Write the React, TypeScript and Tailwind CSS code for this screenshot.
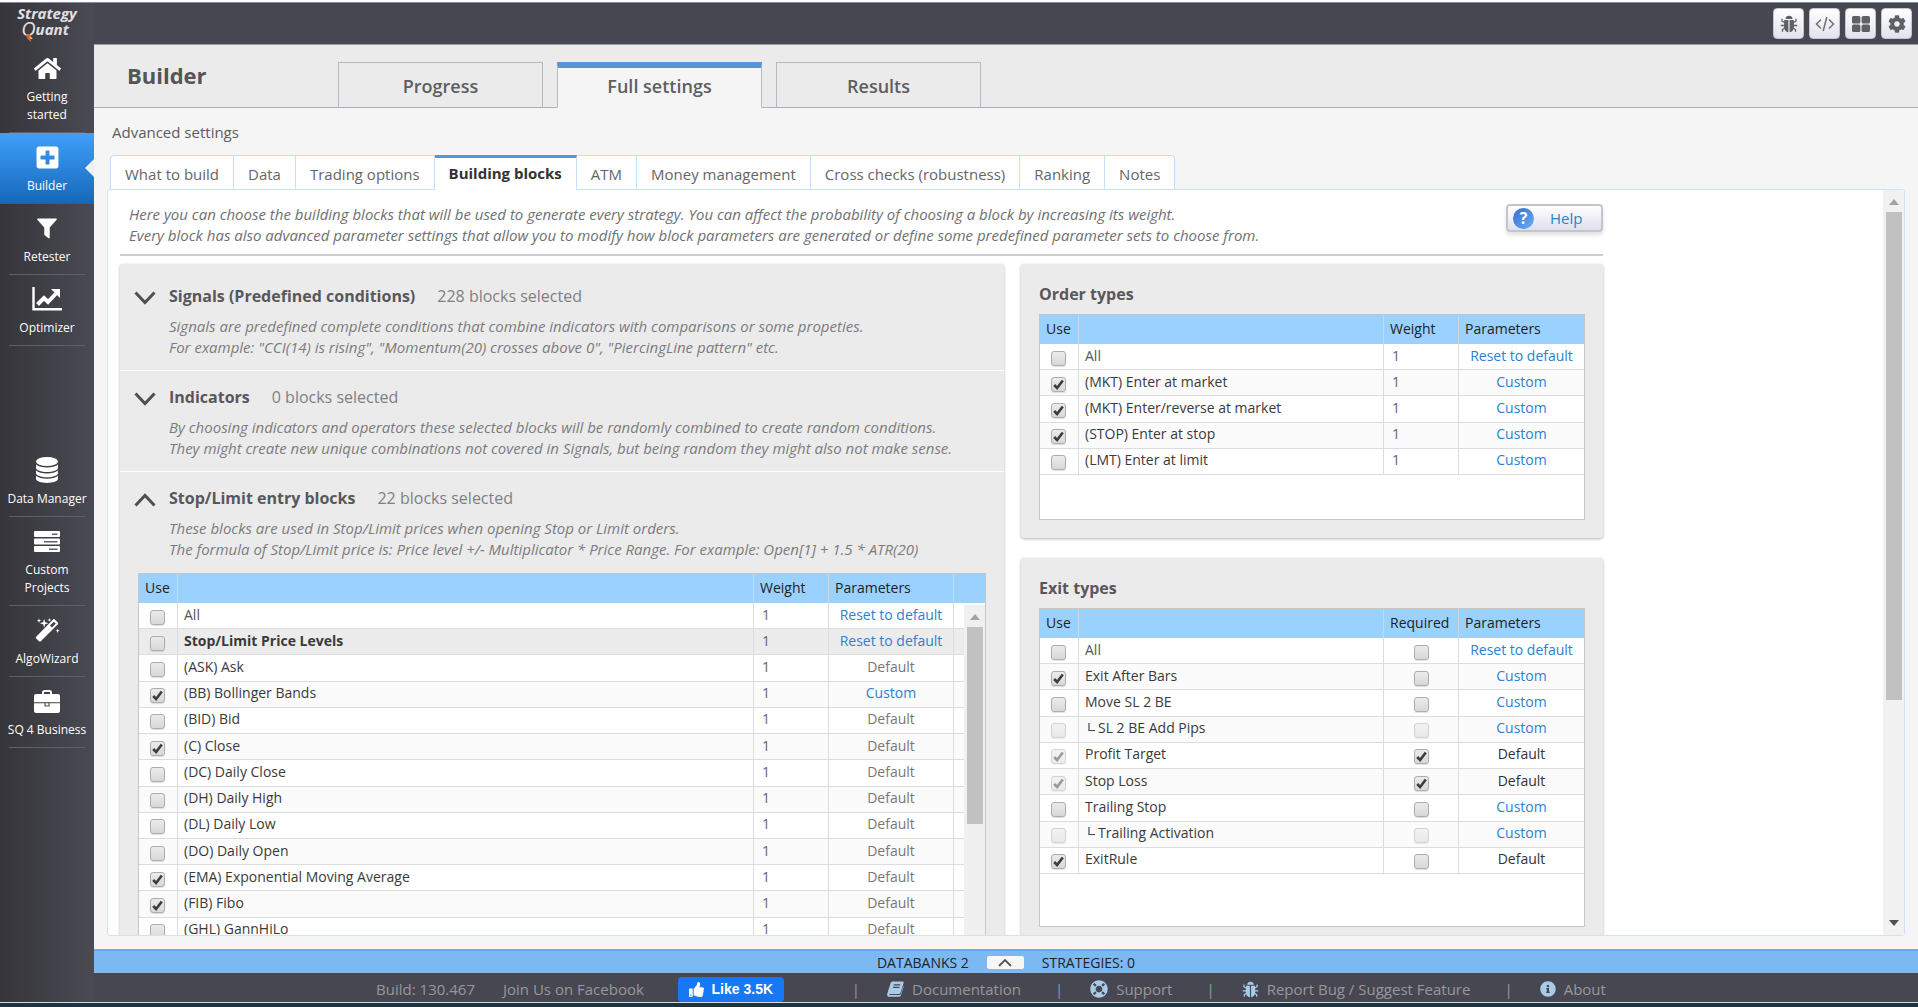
import * as React from "react"
import clsx from "clsx"
import { FaCog, FaHome, FaInfoCircle, FaLifeRing, FaPlusSquare, FaThumbsUp } from "react-icons/fa"

type Row = {
  name: string
  use?: boolean
  useDisabled?: boolean
  weight?: number
  required?: boolean
  requiredDisabled?: boolean
  params: string
  group?: boolean
  child?: boolean
}

const stopLimitRows: Row[] = [
  { name: "All", weight: 1, params: "Reset to default" },
  { name: "Stop/Limit Price Levels", weight: 1, params: "Reset to default", group: true },
  { name: "(ASK) Ask", weight: 1, params: "Default" },
  { name: "(BB) Bollinger Bands", use: true, weight: 1, params: "Custom" },
  { name: "(BID) Bid", weight: 1, params: "Default" },
  { name: "(C) Close", use: true, weight: 1, params: "Default" },
  { name: "(DC) Daily Close", weight: 1, params: "Default" },
  { name: "(DH) Daily High", weight: 1, params: "Default" },
  { name: "(DL) Daily Low", weight: 1, params: "Default" },
  { name: "(DO) Daily Open", weight: 1, params: "Default" },
  { name: "(EMA) Exponential Moving Average", use: true, weight: 1, params: "Default" },
  { name: "(FIB) Fibo", use: true, weight: 1, params: "Default" },
  { name: "(GHL) GannHiLo", weight: 1, params: "Default" },
]

const orderRows: Row[] = [
  { name: "All", weight: 1, params: "Reset to default" },
  { name: "(MKT) Enter at market", use: true, weight: 1, params: "Custom" },
  { name: "(MKT) Enter/reverse at market", use: true, weight: 1, params: "Custom" },
  { name: "(STOP) Enter at stop", use: true, weight: 1, params: "Custom" },
  { name: "(LMT) Enter at limit", weight: 1, params: "Custom" },
]

const exitRows: Row[] = [
  { name: "All", params: "Reset to default" },
  { name: "Exit After Bars", use: true, params: "Custom" },
  { name: "Move SL 2 BE", params: "Custom" },
  { name: "SL 2 BE Add Pips", useDisabled: true, requiredDisabled: true, params: "Custom", child: true },
  { name: "Profit Target", use: true, useDisabled: true, required: true, params: "Default" },
  { name: "Stop Loss", use: true, useDisabled: true, required: true, params: "Default" },
  { name: "Trailing Stop", params: "Custom" },
  { name: "Trailing Activation", useDisabled: true, requiredDisabled: true, params: "Custom", child: true },
  { name: "ExitRule", use: true, params: "Default" },
]

/* ---------- icons ---------- */

function ChartIcon() {
  return (
    <svg width="30" height="24" viewBox="0 0 30 24" fill="none" stroke="white">
      <path d="M1.500 0v22.200H30" strokeWidth="2.400" />
      <path d="M5.500 17.500l6.500-6.500 4 4 8-8.500" strokeWidth="4" />
      <path d="M19 2h9v9z" fill="white" stroke="none" />
    </svg>
  )
}

function FilterIcon() {
  return (
    <svg width="20" height="21" viewBox="0 0 22 22" fill="white">
      <path d="M1 0h20c.8 0 1.100.9.600 1.500L14 10v11.200c0 .7-.7 1-1.300.6L8.500 18.500c-.3-.3-.5-.6-.5-1V10L.4 1.500C-.1.900.2 0 1 0z" />
    </svg>
  )
}

function DatabaseIcon() {
  return (
    <svg width="24" height="26" viewBox="0 0 24 26" fill="white">
      <ellipse cx="12" cy="4.500" rx="11" ry="4.500" />
      <path d="M1 7.500c2 2 6.500 3 11 3s9-1 11-3V11c0 2.200-5 4-11 4S1 13.200 1 11z" />
      <path d="M1 13.500c2 2 6.500 3 11 3s9-1 11-3v2.800c0 2.200-5 4-11 4s-11-1.800-11-4z" />
      <path d="M1 18.800c2 2 6.500 3 11 3s9-1 11-3v3c0 2.300-5 4.200-11 4.200S1 24.100 1 21.800z" />
    </svg>
  )
}

function ProjectsIcon() {
  return (
    <svg width="26" height="21" viewBox="0 0 26 21">
      <g fill="white">
        <rect width="26" height="6" rx="1" />
        <rect y="7.500" width="26" height="6" rx="1" />
        <rect y="15" width="26" height="6" rx="1" />
      </g>
      <g fill="#63636d">
        <rect x="18" y="2.500" width="5.500" height="1.500" />
        <rect x="10" y="10" width="13.500" height="1.500" />
        <rect x="15" y="17.500" width="8.500" height="1.500" />
      </g>
    </svg>
  )
}

function WandIcon() {
  return (
    <svg width="25" height="25" viewBox="0 0 26 26" fill="white">
      <path d="M20.500 1.500l3.300 3.300c.5.500.5 1.200 0 1.700L6 24.300c-.5.500-1.200.5-1.700 0L1.200 21.200c-.5-.5-.5-1.200 0-1.700L18.800 1.500c.5-.5 1.200-.5 1.700 0zM19.600 3.800l-4 4 2 2 4-4z" fillRule="evenodd" />
      <path d="M9.500 1l1.100 3.400L14 5.500l-3.400 1.100L9.500 10 8.400 6.600 5 5.500l3.400-1.100z" />
      <path d="M4.200.5l.6 1.700 1.700.6-1.700.6-.6 1.700-.6-1.700-1.700-.6 1.700-.6zM15 0l.5 1.500 1.500.5-1.500.5L15 4l-.5-1.500L13 2l1.500-.5zM23.500 11l.6 1.700 1.700.6-1.700.6-.6 1.700-.6-1.700-1.700-.6 1.700-.6z" />
    </svg>
  )
}

function BriefcaseIcon() {
  return (
    <svg width="26" height="23" viewBox="0 0 26 23">
      <path d="M9 4V2.500C9 1.700 9.700 1 10.500 1h5c.8 0 1.500.7 1.500 1.500V4" fill="none" stroke="white" strokeWidth="2" />
      <path d="M2 4h22c1.100 0 2 .9 2 2v6.300H0V6c0-1.100.9-2 2-2zM0 13.300h26V21c0 1.100-.9 2-2 2H2c-1.100 0-2-.9-2-2z" fill="white" />
      <path d="M11 12.500v3.500h4v-3.500" fill="none" stroke="#53535d" strokeWidth="1.200" />
    </svg>
  )
}

function BugIcon({ className }: { className?: string }) {
  return (
    <svg viewBox="0 0 18 18" className={className} fill="currentColor">
      <path d="M5.500 4C5.500 2 7 .8 9 .8S12.500 2 12.500 4z" />
      <path d="M4.200 5h4.200v12.300C5.700 17 4 14.800 4 11.500zM13.800 5H9.600v12.300c2.700-.3 4.400-2.500 4.400-5.800z" />
      <path d="M4.600 7.500L2 6V3.800M4.400 10.500H.8M4.800 13l-2.300 1.500v2.300M13.400 7.500L16 6V3.800M13.600 10.500h3.600M13.200 13l2.300 1.500v2.300" fill="none" stroke="currentColor" strokeWidth="1.300" />
    </svg>
  )
}

function CodeIcon() {
  return (
    <svg width="20" height="16" viewBox="0 0 20 16" fill="none" stroke="#707076" strokeWidth="1.500">
      <path d="M6 3.500L1.500 8 6 12.500M14 3.500l4.500 4.500L14 12.500M11.800 1L8.200 15" />
    </svg>
  )
}

function GridIcon() {
  return (
    <svg width="18" height="16" viewBox="0 0 18 16" fill="#5f5f66">
      <rect width="8.400" height="7.400" rx="1.500" />
      <rect x="9.600" width="8.400" height="7.400" rx="1.500" />
      <rect y="8.600" width="8.400" height="7.400" rx="1.500" />
      <rect x="9.600" y="8.600" width="8.400" height="7.400" rx="1.500" />
    </svg>
  )
}

function BookIcon() {
  return (
    <svg width="17" height="16" viewBox="0 0 17 16">
      <path d="M5.500.5h10c.9 0 1.400.7 1.100 1.500l-3.200 10c-.2.700-.8 1.100-1.500 1.100H3c-.7 0-.9.900-.2.900h9.900c.5 0 .9-.3 1-.8l2.800-8.700v1.700l-2.700 8.300c-.3.800-1 1.300-1.800 1.300H2.300C.8 15.800-.2 14.500.2 13L3.600 2C3.900 1.100 4.600.5 5.500.5z" fill="#a9cbe8" />
      <path d="M6.700 3.800h6.500M5.900 6.300h6.500" stroke="#474751" strokeWidth="1.200" />
    </svg>
  )
}

function Chevron({ up }: { up?: boolean }) {
  return (
    <svg width="22" height="14" viewBox="0 0 22 14" fill="none" stroke="#4f4f54" strokeWidth="3" className="mt-[3px] shrink-0">
      <path d={up ? "M1.500 12.500L11 2.500l9.500 10" : "M1.500 1.500l9.500 10 9.500-10"} />
    </svg>
  )
}

/* ---------- small parts ---------- */

function Check({ label, checked, disabled, className }: { label: string; checked?: boolean; disabled?: boolean; className?: string }) {
  const [on, setOn] = React.useState(!!checked)
  return (
    <span className={clsx("relative mt-[5px] block h-[15px] w-[15px]", disabled && "opacity-50", className)}>
      <input
        type="checkbox"
        aria-label={label}
        checked={on}
        disabled={disabled}
        onChange={() => setOn(!on)}
        className="block h-[15px] w-[15px] appearance-none rounded-[3px] border border-[#adadad] bg-gradient-to-b from-[#ebebeb] to-[#d8d8d8] shadow-[0_1px_1px_rgba(0,0,0,0.12)]"
      />
      {on && (
        <svg viewBox="0 0 15 15" className="pointer-events-none absolute inset-0 h-[15px] w-[15px]" fill="none" stroke="#3c3c3c" strokeWidth="2.600">
          <path d="M3.200 8l2.900 3L11.800 3.500" />
        </svg>
      )}
    </span>
  )
}

function ScrollArrow({ down }: { down?: boolean }) {
  return (
    <svg width="10" height="6" viewBox="0 0 10 6" fill={down ? "#505050" : "#a3a3a3"}>
      <path d={down ? "M0 0h10L5 6z" : "M0 6h10L5 0z"} />
    </svg>
  )
}

function Params({ value, muted }: { value: string; muted?: boolean }) {
  if (value === "Default") return <span className={muted ? "text-[#777]" : "text-[#333]"}>Default</span>
  return <a href="#" className="text-[#2e80d0]">{value}</a>
}

function BlocksTable({ rows, column, scroll, className }: { rows: Row[]; column: "Weight" | "Required"; scroll?: boolean; className: string }) {
  const th = "h-[29px] border-r border-[#c6d9e8] px-[6px] pb-0.5 text-left font-normal last:border-r-0"
  const td = "border-r border-b border-[#dcdcdc] p-0 px-[6px] pb-0.5"
  return (
    <table className={clsx("w-full table-fixed border-separate border-spacing-0 text-sm leading-5", className)}>
      <colgroup>
        <col className="w-[39px]" />
        <col />
        <col className="w-[75px]" />
        <col className="w-[125px]" />
        {scroll && <col className="w-[31px]" />}
      </colgroup>
      <thead className="bg-[#9bd1ff] text-[#222]">
        <tr>
          <th className={th}>Use</th>
          <th className={th} aria-label="Name"></th>
          <th className={th}>{column}</th>
          <th className={th}>Parameters</th>
          {scroll && <th className={th} aria-label="Scroll"></th>}
        </tr>
      </thead>
      <tbody>
        {rows.map((row, index) => (
          <tr key={row.name} className={row.group ? "bg-[#ececec]" : index % 2 ? "bg-[#fbfbfb]" : "bg-white"}>
            <td className={td}>
              <Check label={"Use " + row.name} checked={row.use} disabled={row.useDisabled} className="ml-[5px]" />
            </td>
            <td className={clsx(td, row.group && "font-bold", index === 0 ? "text-[#555]" : "text-[#3a3a3a]")}>
              {row.child && (
                <svg width="7" height="10" viewBox="0 0 7 10" className="mr-[3px] mb-1 ml-[3px] inline-block" fill="none" stroke="#444" strokeWidth="1.200">
                  <path d="M1 0v7.500h6" />
                </svg>
              )}
              {row.name}
            </td>
            <td className={clsx(td, "text-[#666]")}>
              {column === "Weight" ? <span className="pl-0.5">{row.weight}</span> : (
                <Check label={"Require " + row.name} checked={row.required} disabled={row.requiredDisabled} className="mx-auto" />
              )}
            </td>
            <td className={clsx(td, "text-center", !scroll && "border-r-0")}>
              <Params value={row.params} muted={scroll} />
            </td>
            {scroll && <td className="border-b border-[#dcdcdc]"></td>}
          </tr>
        ))}
      </tbody>
    </table>
  )
}

function Section({ title, count, open, lines, first, children }: { title: string; count: number; open?: boolean; lines: string[]; first?: boolean; children?: React.ReactNode }) {
  return (
    <section className={clsx("border-b border-white pb-3", first ? "pt-[22px]" : "pt-4")}>
      <button className="flex h-5 items-center pl-[14px] text-base leading-5">
        <Chevron up={open} />
        <span className="ml-[13px] font-bold text-[#58585c]">{title}</span>
        <span className="ml-[22px] text-[#808084]">{count} blocks selected</span>
      </button>
      <p className="mt-[10px] pl-[49px] text-[15px] leading-[21px] text-[#7c7c7e] italic">
        {lines.map((line) => <span key={line} className="block">{line}</span>)}
      </p>
      {children}
    </section>
  )
}

const cardStyle = "rounded-[3px] bg-[#ebebeb] shadow-[0_1px_3px_rgba(0,0,0,0.3)]"

/* ---------- page areas ---------- */

function NavItem({ icon, label, active }: { icon: React.ReactNode; label: string; active?: boolean }) {
  return (
    <a
      href="#"
      className={clsx(
        "relative flex flex-col items-center pt-[11px] text-center text-xs leading-[18px] text-white",
        active && "bg-gradient-to-b from-[#3fa0fb] to-[#1468b8]"
      )}
    >
      <span className="flex h-[26px] items-center">{icon}</span>
      <span className="mt-[7px] px-[6px] whitespace-pre-line">{label}</span>
      <span className={clsx("mt-2 h-px w-[76px]", !active && "bg-[#5f5f69]")} />
      {active && <span className="absolute top-[26px] right-0 border-y-[9px] border-r-[9px] border-y-transparent border-r-[#f0f0f0]" />}
    </a>
  )
}

function Sidebar() {
  return (
    <nav className="flex w-[94px] shrink-0 flex-col bg-gradient-to-r from-[#35353a] to-[#4a4a54]">
      <div className="relative h-[41px] pt-[2px] text-center text-[15px] leading-4 font-bold text-[#e0e0e4] italic">
        <div>Strategy</div>
        <div className="flex items-center justify-center pr-1">
          <span className="text-xl leading-4 font-normal">Q</span>uant
        </div>
        <svg width="6" height="8" viewBox="0 0 6 8" className="absolute top-[31px] left-[26px]">
          <path d="M0 0h4l1 8C2 6 0 3 0 0z" fill="#e0662c" />
        </svg>
      </div>
      <NavItem icon={<FaHome size={27} />} label={"Getting\nstarted"} />
      <NavItem icon={<FaPlusSquare size={25} />} label="Builder" active />
      <NavItem icon={<FilterIcon />} label="Retester" />
      <NavItem icon={<ChartIcon />} label="Optimizer" />
      <div className="mt-[100px]">
        <NavItem icon={<DatabaseIcon />} label="Data Manager" />
        <NavItem icon={<ProjectsIcon />} label={"Custom\nProjects"} />
        <NavItem icon={<WandIcon />} label="AlgoWizard" />
        <NavItem icon={<BriefcaseIcon />} label="SQ 4 Business" />
      </div>
    </nav>
  )
}

function TopBar() {
  const tools = [
    { label: "Debug", icon: <BugIcon className="h-[18px] w-[18px] text-[#5f5f66]" /> },
    { label: "Code editor", icon: <CodeIcon /> },
    { label: "Layout", icon: <GridIcon /> },
    { label: "Settings", icon: <FaCog size={18} color="#5f5f66" /> },
  ]
  return (
    <div className="flex h-[42px] shrink-0 items-center justify-end gap-[5px] border-b border-[#9c9ca4] bg-[#474751] pr-[6px]">
      {tools.map((tool) => (
        <button key={tool.label} aria-label={tool.label} className="flex h-[31px] w-[31px] items-center justify-center rounded border border-[#c5c5d0] bg-gradient-to-b from-white to-[#e2e2ee]">
          {tool.icon}
        </button>
      ))}
    </div>
  )
}

function Header() {
  return (
    <header className="flex h-[63px] shrink-0 items-end border-b border-[#aeaeb6] bg-[#ebebeb] pl-[33px]">
      <h1 className="mb-4 w-[211px] text-[22px] leading-8 font-bold text-[#555]">Builder</h1>
      <div className="-mb-px flex gap-[14px] text-lg font-semibold text-[#5e5e62]">
        {["Progress", "Full settings", "Results"].map((tab) => {
          const active = tab === "Full settings"
          return (
            <button
              key={tab}
              className={clsx(
                "h-[46px] w-[205px] border border-[#b6bac0]",
                active ? "border-t-[6px] border-t-[#5596d6] border-b-[#f5f5f5] bg-[#f5f5f5] pb-[3px]" : "border-b-[#aeaeb6] pt-0.5"
              )}
            >
              {tab}
            </button>
          )
        })}
      </div>
    </header>
  )
}

const subTabs = ["What to build", "Data", "Trading options", "Building blocks", "ATM", "Money management", "Cross checks (robustness)", "Ranking", "Notes"]

function SubTabs() {
  return (
    <div className="relative -mb-px ml-[3px] flex text-[15px]">
      {subTabs.map((tab) => (
        <button
          key={tab}
          className={clsx(
            "h-[35px] border-r border-[#c3e0fb] bg-white px-[14px] first:rounded-tl first:border-l last:rounded-tr",
            tab === "Building blocks"
              ? "border-t-[3px] border-t-[#5596d6] pb-px font-bold text-[#333]"
              : "border-y pt-[3px] text-[#666]"
          )}
        >
          {tab}
        </button>
      ))}
    </div>
  )
}

function SettingsPanel() {
  return (
    <div className="flex min-h-0 flex-1 rounded-[3px] border border-[#cbe4fb] bg-white">
      <div className="min-w-0 flex-1 overflow-hidden">
        <div className="ml-3 flex max-w-[1483px] flex-col pt-[14px]">
          <div className="flex items-start justify-between border-b-2 border-[#cfcfcf] pb-2">
            <p className="pl-[9px] text-[15px] leading-[21px] text-[#707072] italic">
              Here you can choose the building blocks that will be used to generate every strategy. You can affect the probability of choosing a block by increasing its weight.
              <br />
              Every block has also advanced parameter settings that allow you to modify how block parameters are generated or define some predefined parameter sets to choose from.
            </p>
            <button className="flex h-7 w-[97px] items-center rounded border-2 border-[#c4c4cf] bg-gradient-to-b from-white to-[#e0e0ee] pl-[5px] text-[15px] text-[#2a82cc] shadow-[0_3px_4px_rgba(0,0,0,0.12)]">
              <span className="mr-4 flex h-[21px] w-[21px] items-center justify-center rounded-full bg-gradient-to-br from-[#3a6bd0] to-[#6ab0f4] text-base font-bold text-white">?</span>
              Help
            </button>
          </div>

          <div className="mt-2 flex items-start gap-[17px]">
            <div className={clsx("min-w-0 flex-1", cardStyle)}>
              <Section
                first
                title="Signals (Predefined conditions)"
                count={228}
                lines={[
                  "Signals are predefined complete conditions that combine indicators with comparisons or some propeties.",
                  'For example: "CCI(14) is rising", "Momentum(20) crosses above 0", "PiercingLine pattern" etc.',
                ]}
              />
              <Section
                title="Indicators"
                count={0}
                lines={[
                  "By choosing indicators and operators these selected blocks will be randomly combined to create random conditions.",
                  "They might create new unique combinations not covered in Signals, but being random they might also not make sense.",
                ]}
              />
              <Section
                open
                title="Stop/Limit entry blocks"
                count={22}
                lines={[
                  "These blocks are used in Stop/Limit prices when opening Stop or Limit orders.",
                  "The formula of Stop/Limit price is: Price level +/- Multiplicator * Price Range. For example: Open[1] + 1.5 * ATR(20)",
                ]}
              >
                <div className="relative mx-[18px] mt-[13px] border border-[#c6c6c6] bg-white">
                  <BlocksTable rows={stopLimitRows} column="Weight" scroll className="h-[370px]" />
                  <div aria-hidden="true" className="absolute top-[31px] right-0 bottom-0 flex w-[21px] flex-col items-center bg-[#f0f0f0] pt-[9px]">
                    <ScrollArrow />
                    <div className="mt-[7px] h-[197px] w-4 bg-[#c1c1c1]" />
                  </div>
                </div>
              </Section>
            </div>

            <div className="flex w-[582px] shrink-0 flex-col gap-5">
              <section className={clsx("px-[18px] pt-5 pb-[18px]", cardStyle)}>
                <h2 className="mb-[10px] text-base leading-5 font-bold text-[#58585c]">Order types</h2>
                <div className="min-h-[206px] border border-[#c6c6c6] bg-white">
                  <BlocksTable rows={orderRows} column="Weight" className="h-[160px]" />
                </div>
              </section>
              <section className={clsx("px-[18px] pt-5 pb-[18px]", cardStyle)}>
                <h2 className="mb-[10px] text-base leading-5 font-bold text-[#58585c]">Exit types</h2>
                <div className="min-h-[319px] border border-[#c6c6c6] bg-white">
                  <BlocksTable rows={exitRows} column="Required" className="h-[265px]" />
                </div>
              </section>
            </div>
          </div>
        </div>
      </div>
      <div aria-hidden="true" className="flex w-[21px] flex-col items-center bg-[#f1f1f1] py-[9px]">
        <ScrollArrow />
        <div className="mt-[7px] h-[488px] w-4 bg-[#c1c1c1]" />
        <div className="mt-auto"><ScrollArrow down /></div>
      </div>
    </div>
  )
}

function DatabanksBar() {
  return (
    <div className="flex h-[24px] shrink-0 items-center justify-center gap-[18px] border-t-2 border-[#62aef6] bg-[#7cb9f3] pt-px text-sm text-[#222]">
      <span>DATABANKS 2</span>
      <button aria-label="Show databanks" className="flex h-[13px] w-[37px] items-center justify-center rounded-[2px] bg-[#f7f7f7]">
        <svg width="14" height="8" viewBox="0 0 14 8" fill="none" stroke="#555" strokeWidth="1.800">
          <path d="M1 7l6-6 6 6" />
        </svg>
      </button>
      <span>STRATEGIES: 0</span>
    </div>
  )
}

function Footer() {
  const links = [
    { label: "Documentation", icon: <BookIcon /> },
    { label: "Support", icon: <FaLifeRing size={18} /> },
    { label: "Report Bug / Suggest Feature", icon: <BugIcon className="h-[17px] w-[17px]" /> },
    { label: "About", icon: <FaInfoCircle size={16} /> },
  ]
  return (
    <footer className="flex h-[29px] shrink-0 items-center justify-center bg-[#474751] pt-[3px] pr-[30px] text-[15px] text-[#97979b]">
      <span className="mr-7">Build: 130.467</span>
      <a href="#">Join Us on Facebook</a>
      <button className="mr-[68px] ml-[34px] flex h-[25px] w-[106px] items-center justify-center gap-2 rounded bg-[#1877f2] font-['Liberation_Sans',sans-serif] text-sm font-bold text-white">
        <FaThumbsUp size={15} />
        Like 3.5K
      </button>
      {links.map((link, index) => (
        <React.Fragment key={link.label}>
          <span className={index > 0 ? "ml-[34px]" : undefined}>|</span>
          <a href="#" className="ml-[27px] flex items-center gap-2">
            <span className="text-[#a9cbe8]">{link.icon}</span>
            {link.label}
          </a>
        </React.Fragment>
      ))}
    </footer>
  )
}

export default function App() {
  return (
    <div className="flex h-screen flex-col overflow-hidden bg-[#1c3340] pb-1 font-['Open_Sans','Noto_Sans',sans-serif]">
      <div className="h-[3px] shrink-0 border-b border-[#7d8ba3] bg-white" />
      <div className="flex min-h-0 flex-1 border-b border-[#d8d8dc]">
        <Sidebar />
        <div className="flex min-w-0 flex-1 flex-col bg-[#f5f5f5]">
          <TopBar />
          <Header />
          <main className="flex min-h-0 flex-1 flex-col px-[13px] pt-[14px] pb-[13px]">
            <h2 className="mb-[13px] ml-[5px] text-[15px] leading-5 text-[#5c5c5f]">Advanced settings</h2>
            <SubTabs />
            <SettingsPanel />
          </main>
          <DatabanksBar />
          <Footer />
        </div>
      </div>
    </div>
  )
}
